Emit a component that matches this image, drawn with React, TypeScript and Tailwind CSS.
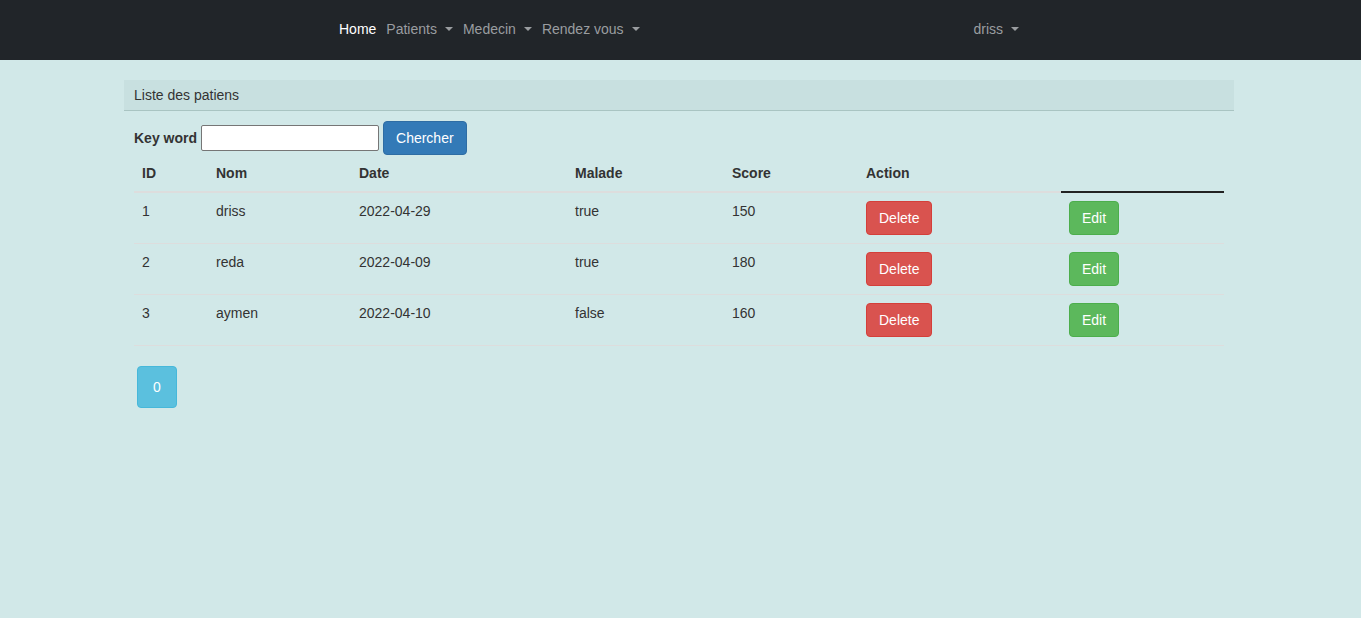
const patients = [
  { id: 1, nom: 'driss', date: '2022-04-29', malade: 'true', score: 150 },
  { id: 2, nom: 'reda', date: '2022-04-09', malade: 'true', score: 180 },
  { id: 3, nom: 'aymen', date: '2022-04-10', malade: 'false', score: 160 },
];

function Caret() {
  return (
    <span className="ml-[8px] inline-block w-0 h-0 border-x-[4px] border-x-transparent border-t-[4px] border-t-current align-middle" />
  );
}

function NavItem({ label, active, dropdown }: { label: string; active?: boolean; dropdown?: boolean }) {
  return (
    <a
      href="#"
      className={
        active
          ? 'px-[5px] text-white flex items-center'
          : 'px-[5px] text-[#9a9da0] hover:text-gray-300 flex items-center'
      }
    >
      {label}
      {dropdown && <Caret />}
    </a>
  );
}

export default function App() {
  return (
    <div className="min-h-screen bg-[#d1e8e8] text-[#333] text-[14px] leading-5 font-['Liberation_Sans',Arial,sans-serif]">
      <nav className="h-[60px] bg-[#212529] pr-[3px]">
        <div className="mx-auto w-[690px] h-full pb-[2px] flex items-center justify-between">
          <div className="flex items-center">
            <NavItem label="Home" active />
            <NavItem label="Patients" dropdown />
            <NavItem label="Medecin" dropdown />
            <NavItem label="Rendez vous" dropdown />
          </div>
          <div className="flex items-center">
            <NavItem label="driss" dropdown />
          </div>
        </div>
      </nav>

      <div className="pr-[3px]">
        <div className="mx-auto w-[1110px] mt-5">
          <div className="bg-[#c8e0e0] border-b border-[#a9c4c2] px-[10px] py-[5px]">Liste des patiens</div>

          <div className="p-[10px]">
            <form className="flex items-center gap-1" onSubmit={(e) => e.preventDefault()}>
              <label className="font-bold">Key word</label>
              <input
                type="text"
                className="w-[178px] h-[26px] bg-white border border-[#767676] rounded-[2px] px-1"
              />
              <button
                type="submit"
                className="h-[34px] px-3 bg-[#337ab7] border border-[#2e6da4] rounded text-white"
              >
                Chercher
              </button>
            </form>

            <table className="w-full border-collapse mb-5">
              <thead>
                <tr className="text-left">
                  <th className="w-[74px] p-2 border-b-2 border-[#dddddd]">ID</th>
                  <th className="w-[143px] p-2 border-b-2 border-[#dddddd]">Nom</th>
                  <th className="w-[216px] p-2 border-b-2 border-[#dddddd]">Date</th>
                  <th className="w-[157px] p-2 border-b-2 border-[#dddddd]">Malade</th>
                  <th className="w-[134px] p-2 border-b-2 border-[#dddddd]">Score</th>
                  <th className="w-[203px] p-2 border-b-2 border-[#dddddd]">Action</th>
                  <th className="p-2 border-b-2 border-[#222]"></th>
                </tr>
              </thead>
              <tbody>
                {patients.map((p) => (
                  <tr key={p.id} className="border-b border-[#dddddd] align-top">
                    <td className="p-2">{p.id}</td>
                    <td className="p-2">{p.nom}</td>
                    <td className="p-2">{p.date}</td>
                    <td className="p-2">{p.malade}</td>
                    <td className="p-2">{p.score}</td>
                    <td className="p-2">
                      <button className="h-[34px] px-3 bg-[#d9534f] border border-[#d43f3a] rounded text-white">
                        Delete
                      </button>
                    </td>
                    <td className="p-2">
                      <button className="h-[34px] px-3 bg-[#5cb85c] border border-[#4cae4c] rounded text-white">
                        Edit
                      </button>
                    </td>
                  </tr>
                ))}
              </tbody>
            </table>

            <div className="flex pl-[3px]">
              <button className="h-[42px] px-[15px] bg-[#5bc0de] border border-[#46b8da] rounded text-white">
                0
              </button>
            </div>
          </div>
        </div>
      </div>
    </div>
  );
}
